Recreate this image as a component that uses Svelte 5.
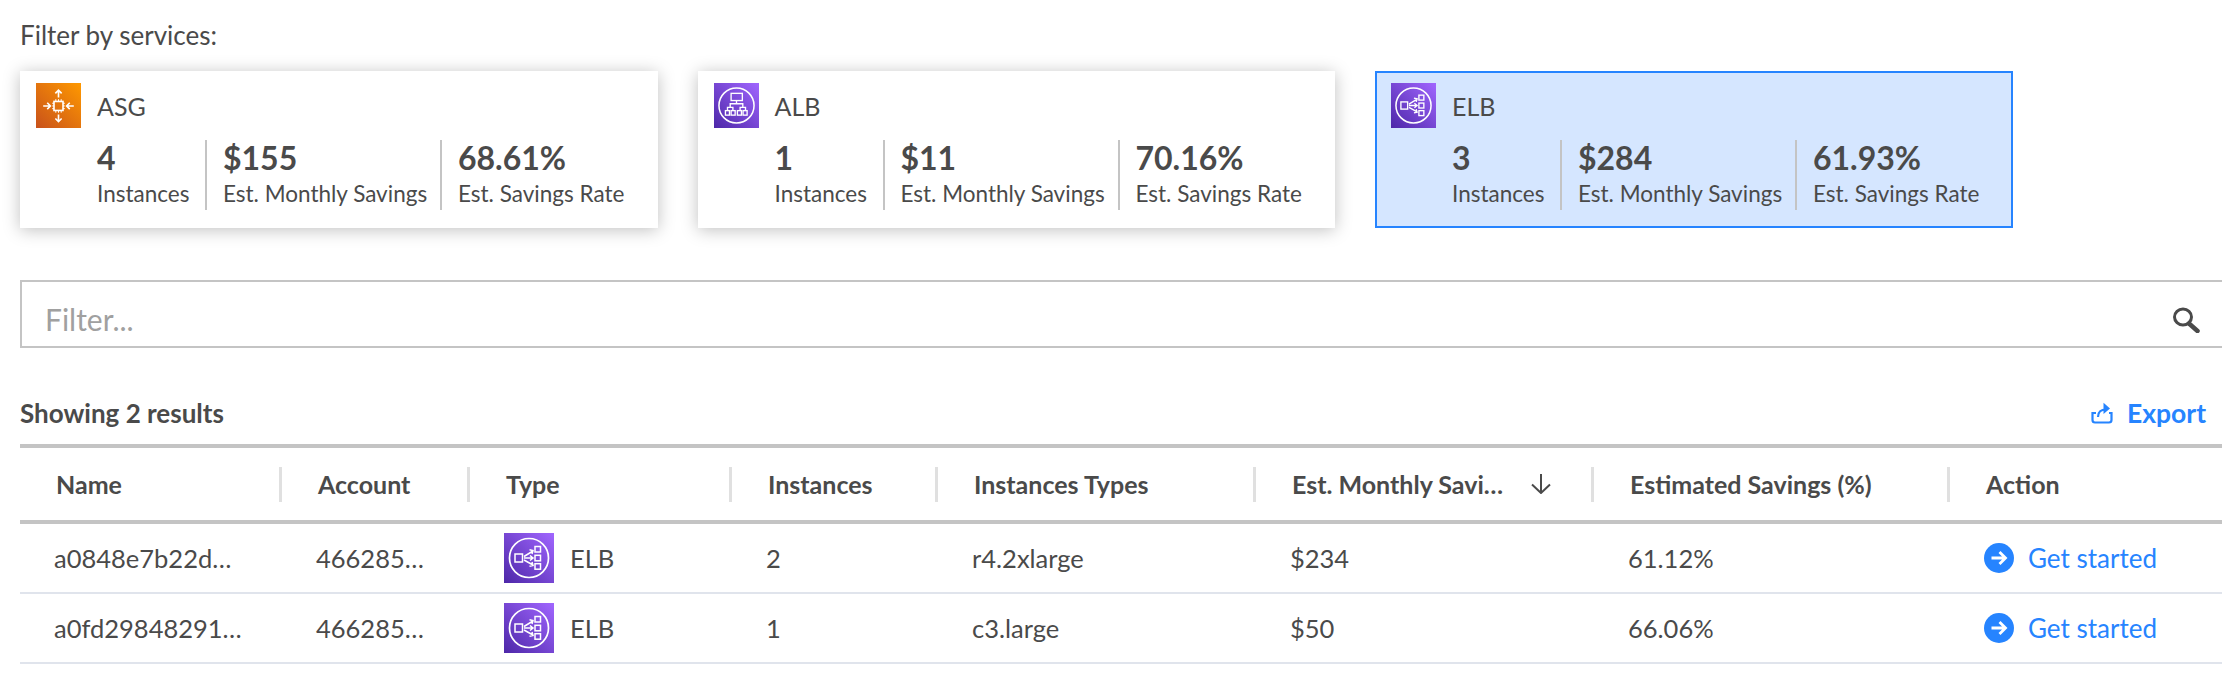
<script>
  const cards = [
    { name: 'ASG', icon: 'asg', n: '4', save: '$155', rate: '68.61%', selected: false },
    { name: 'ALB', icon: 'alb', n: '1', save: '$11', rate: '70.16%', selected: false },
    { name: 'ELB', icon: 'elb', n: '3', save: '$284', rate: '61.93%', selected: true }
  ];
  const headers = ['Name', 'Account', 'Type', 'Instances', 'Instances Types', 'Est. Monthly Savi…', 'Estimated Savings (%)', 'Action'];
  const rows = [
    { name: 'a0848e7b22d…', account: '466285…', n: '2', types: 'r4.2xlarge', save: '$234', rate: '61.12%' },
    { name: 'a0fd29848291…', account: '466285…', n: '1', types: 'c3.large', save: '$50', rate: '66.06%' }
  ];
</script>

{#snippet awsIcon(kind, cls)}
  <svg class={cls} viewBox="0 0 50 50" fill="none" stroke="#fff" stroke-width="1.5">
    <defs>
      <linearGradient id="g-{kind}-{cls}" x1="0" y1="1" x2="1" y2="0">
        <stop offset="0" stop-color={kind === 'asg' ? '#c8511b' : '#4d27a8'} />
        <stop offset="1" stop-color={kind === 'asg' ? '#ff9900' : '#a166ff'} />
      </linearGradient>
    </defs>
    <rect width="50" height="50" fill="url(#g-{kind}-{cls})" stroke="none" />
    {#if kind === 'asg'}
      <rect x="20" y="20.5" width="10" height="10" stroke-width="1.8" />
      <path d="M22 18v2M25 18v2M28 18v2M22 31v2M25 31v2M28 31v2M18 22.5h2M18 25.5h2M18 28.5h2M30 22.5h2M30 25.5h2M30 28.5h2" stroke-width="1.100" />
      <path d="M25 16V8M21.500 11.500 25 8l3.500 3.500M25 35v8M21.500 39.500 25 43l3.500-3.500M8 25.500h8M12.500 22l3.500 3.500-3.500 3.500M42 25.500h-8M37.500 22 34 25.500l3.500 3.500" stroke-width="1.800" />
    {:else if kind === 'alb'}
      <circle cx="25" cy="25" r="19.500" stroke-width="1.700" />
      <rect x="19" y="11.500" width="12.500" height="8" />
      <path d="M25 19.500V23M18 27v-4h14v4M15 30.700V27h6v3.700M29 30.700V27h6v3.700" />
      <rect x="12.700" y="30.700" width="4.500" height="5" />
      <rect x="19" y="30.700" width="4.500" height="5" />
      <rect x="26" y="30.700" width="4.500" height="5" />
      <rect x="32.300" y="30.700" width="4.500" height="5" />
    {:else}
      <circle cx="25" cy="25" r="19.500" stroke-width="1.700" />
      <rect x="11" y="21" width="7.500" height="8" />
      <rect x="31" y="13.500" width="5.500" height="5.500" />
      <rect x="31" y="22.300" width="5.500" height="5.500" />
      <rect x="31" y="30.700" width="5.500" height="5.500" />
      <path d="M20 23.500 29 18M25.500 16.800 29 17.500l-1 3.500M20 25h9M26 22.500l3 2.500-3 2.500M20 27l9 5M28 29l1 3.500-3.500.700" />
    {/if}
  </svg>
{/snippet}

<main class="page">
  <div class="title">Filter by services:</div>

  <div class="cards">
    {#each cards as c}
      <div class="card" class:selected={c.selected}>
        <div class="card-head">
          {@render awsIcon(c.icon, 'card-icon')}
          <span class="card-name">{c.name}</span>
        </div>
        <div class="stats">
          <div class="stat s1"><div class="value">{c.n}</div><div class="label">Instances</div></div>
          <div class="stat s2"><div class="value">{c.save}</div><div class="label">Est. Monthly Savings</div></div>
          <div class="stat s3"><div class="value">{c.rate}</div><div class="label">Est. Savings Rate</div></div>
        </div>
      </div>
    {/each}
  </div>

  <div class="filter">
    <span class="placeholder">Filter...</span>
    <svg class="search" viewBox="0 0 28 26" fill="none" stroke="#4a4a4a">
      <ellipse cx="11" cy="10" rx="8.500" ry="8" stroke-width="3" />
      <path d="M17 16.500 25.500 24" stroke-width="4.500" stroke-linecap="round" />
    </svg>
  </div>

  <div class="bar">
    <span class="showing">Showing 2 results</span>
    <span class="export">
      <svg class="export-icon" viewBox="0 0 22 22" fill="none" stroke="#2684ff" stroke-width="2.200">
        <path d="M5 11H1.500v7a2.500 2.500 0 0 0 2.500 2.500h14a2.500 2.500 0 0 0 2.500-2.500v-7H18" />
        <path d="M7 15c0-5 3-7.500 8-7.500" />
        <path d="M12.500 0.800 19 6.500 12.500 12z" fill="#2684ff" stroke="none" />
      </svg>
      Export
    </span>
  </div>

  <div class="table">
    <div class="row header">
      {#each headers as h, i}
        <div class="th" class:last={i === headers.length - 1}>
          <span>{h}</span>
          {#if i === 5}
            <svg class="sort" viewBox="0 0 22 20" fill="none" stroke="#4a4a4a" stroke-width="2"><path d="M11 0v19M2 10.500 11 19l9-8.500" /></svg>
          {/if}
        </div>
      {/each}
    </div>
    {#each rows as r}
      <div class="row body">
        <div class="td">{r.name}</div>
        <div class="td">{r.account}</div>
        <div class="td type">{@render awsIcon('elb', 'row-icon')}<span>ELB</span></div>
        <div class="td">{r.n}</div>
        <div class="td">{r.types}</div>
        <div class="td">{r.save}</div>
        <div class="td">{r.rate}</div>
        <div class="td action">
          <svg class="go" viewBox="0 0 30 30">
            <circle cx="15" cy="15" r="15" fill="#2684ff" />
            <path d="M7.500 15h14M15.500 9l6 6-6 6" fill="none" stroke="#fff" stroke-width="2.800" />
          </svg>
          <span>Get started</span>
        </div>
      </div>
    {/each}
  </div>
</main>

<style>
  :global(body) {
    margin: 0;
    background: #fff;
    overflow: hidden;
  }
  .page {
    width: 2222px;
    height: 692px;
    box-sizing: border-box;
    padding-left: 20px;
    overflow: hidden;
    font-family: Lato, "Open Sans", sans-serif;
    color: #4a4a4a;
    font-size: 22.500px;
  }
  .title {
    height: 71px;
    line-height: 70px;
    font-size: 26px;
  }
  .cards {
    display: flex;
    gap: 40px;
  }
  .card {
    width: 637.500px;
    height: 157px;
    box-sizing: border-box;
    padding: 12px 16px 0;
    background: #fff;
    box-shadow: 0 2px 16px rgba(0, 0, 0, 0.25);
  }
  .card.selected {
    background: #d5e6ff;
    border: 2px solid #2684ff;
    padding: 10px 14px 0;
    box-shadow: none;
  }
  .card-head {
    display: flex;
    align-items: center;
    gap: 16px;
    height: 45px;
  }
  :global(.card-icon) {
    width: 45px;
    height: 45px;
    flex: none;
  }
  .card-name {
    font-size: 25px;
  }
  .stats {
    display: flex;
    margin: 12px 0 0 61px;
    height: 70px;
  }
  .stat {
    box-sizing: border-box;
    white-space: nowrap;
  }
  .s1 { width: 110px; border-right: 2px solid #c4c4c4; }
  .s2 { width: 235px; padding-left: 16px; border-right: 2px solid #c4c4c4; }
  .s3 { padding-left: 16px; }
  .value {
    font-size: 32px;
    font-weight: 700;
    line-height: 36px;
  }
  .label {
    line-height: 35px;
  }
  .filter {
    display: flex;
    align-items: center;
    justify-content: space-between;
    box-sizing: border-box;
    width: 2202px;
    height: 68px;
    margin-top: 52px;
    padding: 9px 22px 0 23px;
    border: 2px solid #c4c4c4;
    border-right: none;
    font-size: 30px;
    font-weight: 400;
    color: #a0a0a0;
  }
  .search {
    width: 28px;
    height: 26px;
    margin-top: 2px;
  }
  .bar {
    display: flex;
    align-items: center;
    justify-content: space-between;
    height: 96px;
    box-sizing: border-box;
    padding: 34px 16px 0 0;
    font-weight: 700;
    font-size: 26px;
  }
  .export {
    display: flex;
    align-items: center;
    gap: 14px;
    color: #2684ff;
    font-size: 26.500px;
  }
  .export-icon {
    width: 22px;
    height: 22px;
  }
  .table {
    width: 2202px;
    font-size: 25.500px;
  }
  .row {
    display: grid;
    grid-template-columns: 262px 188px 262px 206px 318px 338px 356px 272px;
    align-items: center;
  }
  .header {
    height: 80px;
    box-sizing: border-box;
    border-top: 4px solid #c4c4c4;
    border-bottom: 4px solid #c4c4c4;
    font-weight: 700;
    font-size: 25px;
  }
  .th {
    display: flex;
    align-items: center;
    justify-content: space-between;
    box-sizing: border-box;
    height: 35px;
    padding: 0 26px 0 36px;
    border-right: 3px solid #e0e0e0;
    white-space: nowrap;
  }
  .th.last {
    border-right: none;
  }
  .sort {
    width: 22px;
    height: 20px;
    flex: none;
    margin-right: 13px;
  }
  .body {
    height: 70px;
    box-sizing: border-box;
    border-bottom: 2px solid #e0e4ec;
  }
  .td {
    padding-left: 34px;
    white-space: nowrap;
  }
  .type, .action {
    display: flex;
    align-items: center;
  }
  :global(.row-icon) {
    width: 50px;
    height: 50px;
    margin-right: 16px;
    flex: none;
  }
  .action {
    color: #2684ff;
    font-size: 26px;
    gap: 14px;
  }
  .go {
    width: 30px;
    height: 30px;
    flex: none;
  }
</style>
